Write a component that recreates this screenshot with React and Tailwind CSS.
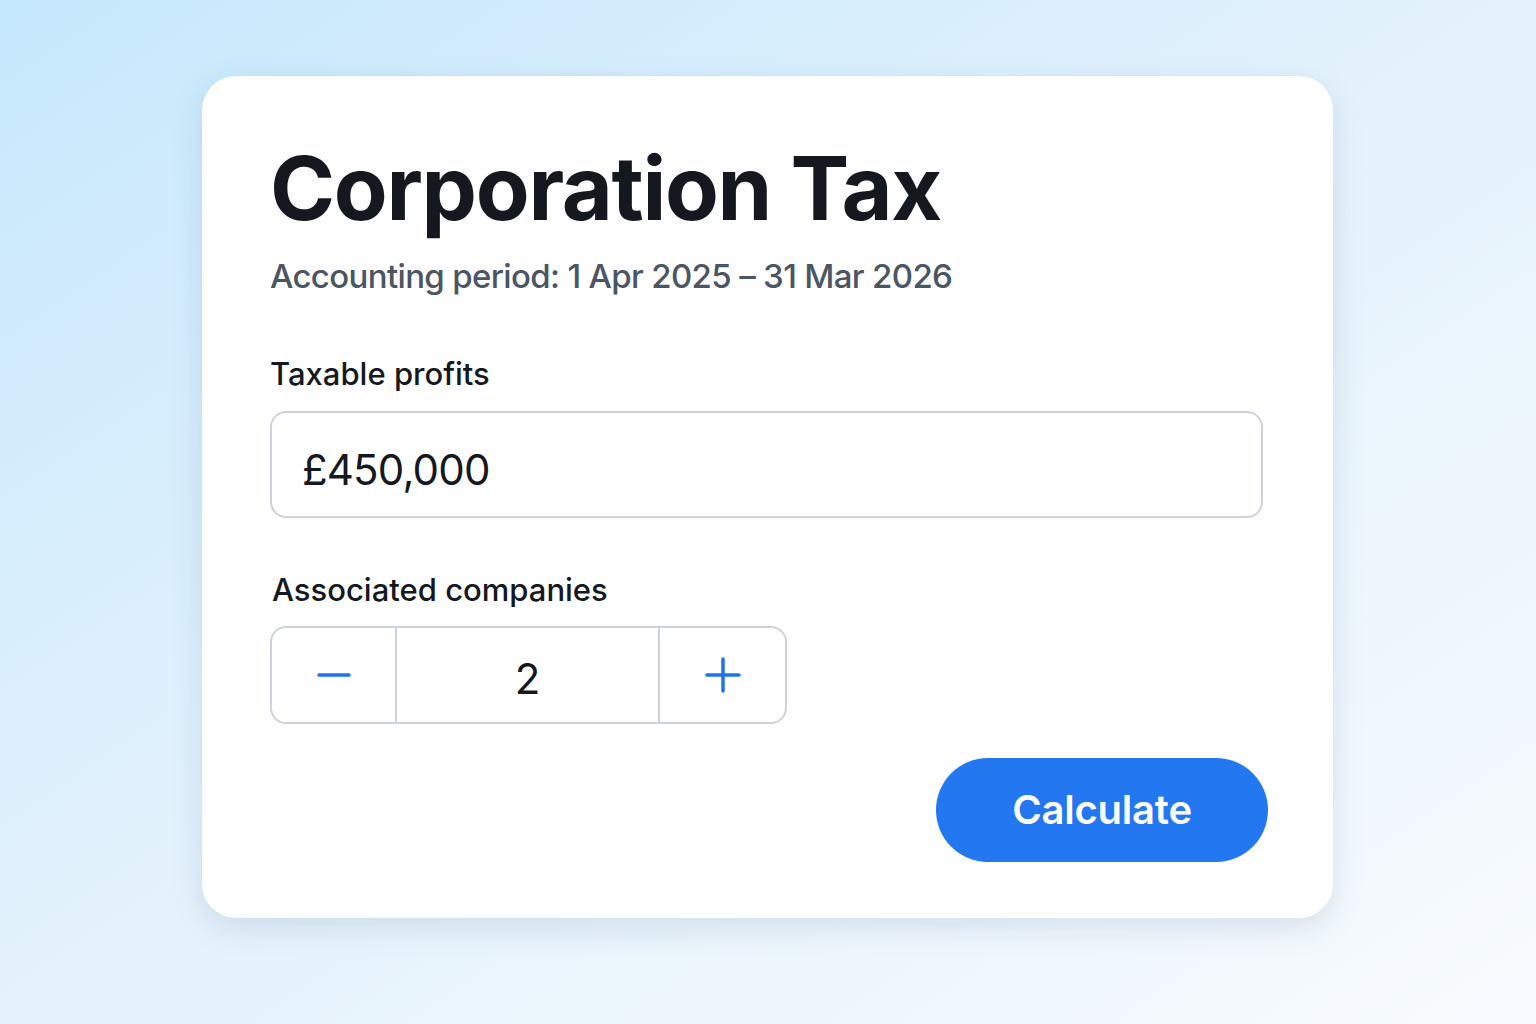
export default function App() {
  return (
    <div
      className="w-[1536px] h-[1024px] overflow-hidden bg-gradient-to-br from-[#c6e8fc] via-[#e4f2fc] to-[#f8fbfe] relative"
      style={{ fontFamily: "Inter, 'Noto Sans', sans-serif" }}
    >
      <div className="absolute left-[202px] top-[76px] w-[1131px] h-[842px] bg-white rounded-[34px] shadow-[0_10px_30px_rgba(90,120,150,0.18)] pl-[68px] pr-[70px] pt-[52px]">
        <h1 className="text-[88px] leading-[120px] font-bold text-[#15191f] tracking-[-0.015em]">Corporation Tax</h1>
        <p className="mt-[8px] text-[33px] leading-[40px] font-medium text-[#4b5563] tracking-[-0.02em]">
          Accounting period: 1 Apr 2025 – 31 Mar 2026
        </p>
        <div className="mt-[58px] text-[31px] leading-[40px] font-medium text-[#15191f]">Taxable profits</div>
        <div className="mt-[17px] h-[107px] rounded-[16px] border-2 border-[#cdd2dc] flex items-center pl-[30px] pt-[10px]">
          <span className="text-[42px] font-normal text-[#15191f] tracking-[-0.02em]">£450,000</span>
        </div>
        <div className="mt-[52px] text-[31px] leading-[40px] font-medium text-[#15191f] pl-[2px]">Associated companies</div>
        <div className="mt-[16px] w-[517px] h-[98px] rounded-[16px] border-2 border-[#cdd2dc] flex">
          <div className="w-[125px] flex items-center justify-center border-r-2 border-[#cdd2dc]">
            <svg width="34" height="34" viewBox="0 0 34 34"><path d="M2 17H32" stroke="#1f74ee" strokeWidth="3.5" strokeLinecap="round" /></svg>
          </div>
          <div className="w-[263px] flex items-center justify-center border-r-2 border-[#cdd2dc] text-[42px] text-[#15191f] pt-[6px]">2</div>
          <div className="flex-1 flex items-center justify-center">
            <svg width="36" height="36" viewBox="0 0 36 36"><path d="M2 18H34M18 2V34" stroke="#1f74ee" strokeWidth="3.5" strokeLinecap="round" /></svg>
          </div>
        </div>
        <div className="flex justify-end mt-[34px] -mr-[5px]">
          <button className="w-[332px] h-[104px] rounded-full bg-[#2378f2] text-white text-[40px] font-semibold tracking-[-0.005em]">Calculate</button>
        </div>
      </div>
    </div>
  );
}
